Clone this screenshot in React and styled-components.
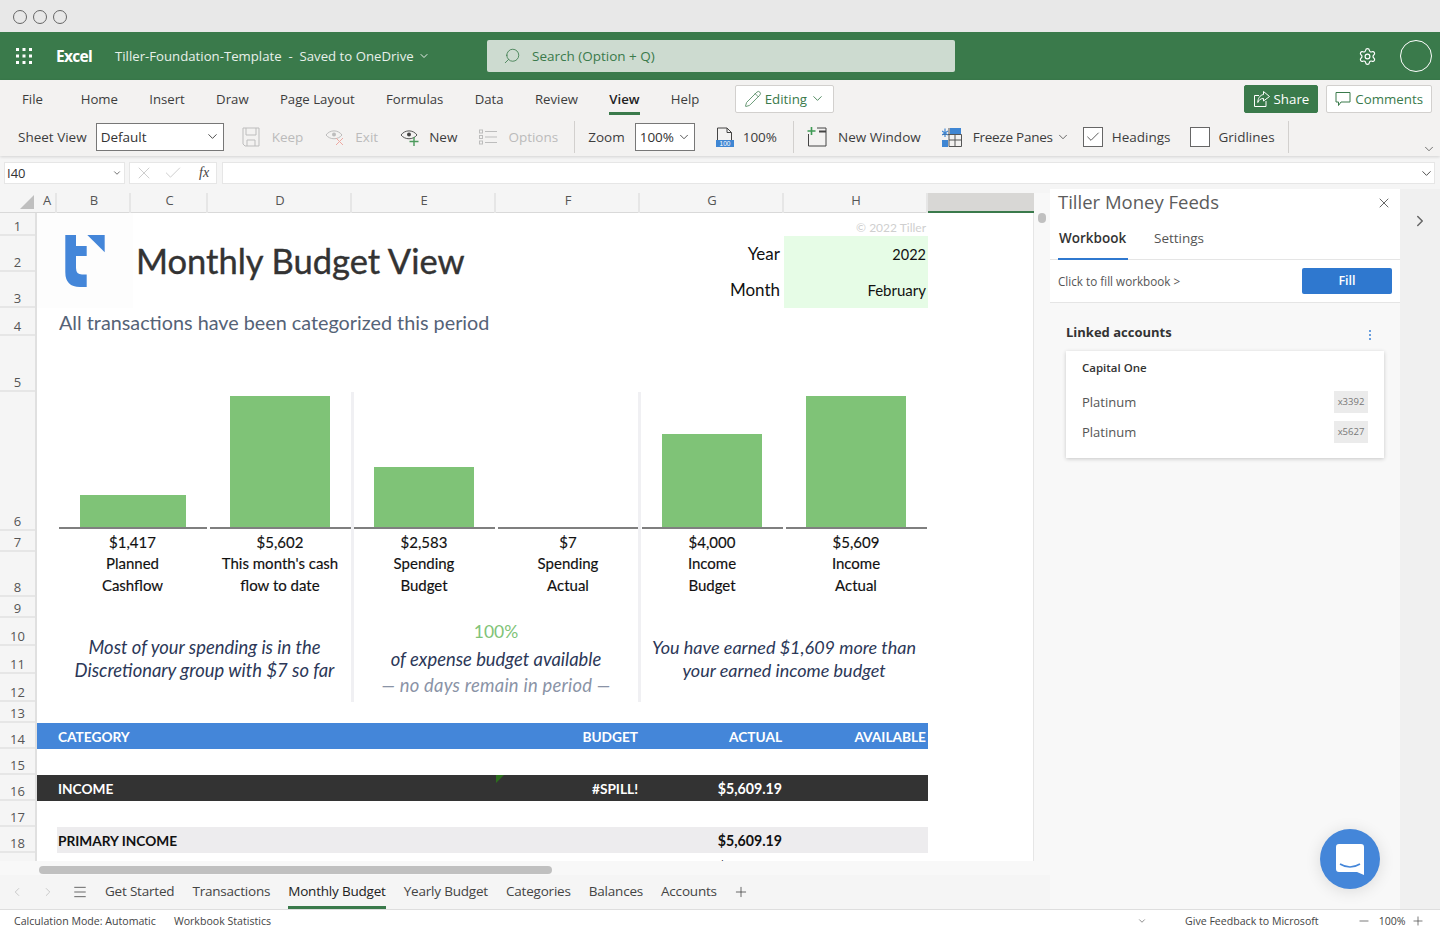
import React from 'react';
import styled, { createGlobalStyle } from 'styled-components';
import { ChevronDown, ChevronLeft, ChevronRight, Check, X, Plus, Minus, Menu, Search, Settings, Pencil } from 'lucide-react';

const GREEN = '#3a7a4b';
const BLUE = '#4486d9';
const UI_FONT = '"Open Sans", "Noto Sans", sans-serif';
const SHEET_FONT = 'Lato, "Open Sans", sans-serif';

const COLUMNS = [
  ['A', 20],
  ['B', 74],
  ['C', 77],
  ['D', 144],
  ['E', 144],
  ['F', 144],
  ['G', 144],
  ['H', 144],
];
const ROW_HEIGHTS = [24, 36, 36, 28, 56, 139, 21, 45, 21, 28, 28, 28, 21, 26, 26, 26, 26, 26];
const GRID_COLUMNS = COLUMNS.map((c) => `${c[1]}px`).join(' ') + ' 106px';
const GRID_ROWS = ROW_HEIGHTS.map((h) => `${h}px`).join(' ') + ' 26px';

const MENU = ['Home', 'Insert', 'Draw', 'Page Layout', 'Formulas', 'Data', 'Review', 'View', 'Help'];
const SHEETS = ['Get Started', 'Transactions', 'Monthly Budget', 'Yearly Budget', 'Categories', 'Balances', 'Accounts'];

const SUMMARY = [
  { col: '2 / 4', height: 32, width: 106, amount: '$1,417', lines: ['Planned', 'Cashflow'] },
  { col: '4', height: 131, width: 100, amount: '$5,602', lines: ["This month's cash", 'flow to date'] },
  { col: '5', height: 60, width: 100, amount: '$2,583', lines: ['Spending', 'Budget'] },
  { col: '6', height: 0, width: 100, amount: '$7', lines: ['Spending', 'Actual'] },
  { col: '7', height: 93, width: 100, amount: '$4,000', lines: ['Income', 'Budget'] },
  { col: '8', height: 131, width: 100, amount: '$5,609', lines: ['Income', 'Actual'] },
];

const GlobalStyle = createGlobalStyle`
  * { box-sizing: border-box; }
  html, body { margin: 0; padding: 0; background: #f3f2f1; }
  body { font-family: ${UI_FONT}; color: #333; }
`;

const Page = styled.div`
  width: 1440px;
  height: 932px;
  display: flex;
  flex-direction: column;
  overflow: hidden;
`;

const TitleBar = styled.div`
  height: 32px;
  background: #e8e8e8;
  display: flex;
  align-items: center;
  gap: 6px;
  padding: 2px 0 0 13px;
`;

const WindowDot = styled.span`
  width: 14px;
  height: 14px;
  border-radius: 50%;
  border: 1px solid #666;
`;

const AppBar = styled.div`
  height: 48px;
  background: ${GREEN};
  color: #fff;
  display: flex;
  align-items: center;
  padding-left: 16px;
  position: relative;
`;

const AppName = styled.div`
  font-weight: 700;
  font-size: 15.5px;
  letter-spacing: -0.7px;
  margin-left: 24px;
  width: 59px;
`;

const DocName = styled.div`
  font-size: 13.2px;
  display: flex;
  align-items: center;
  gap: 4px;
  width: 372px;
  white-space: pre;
  color: #e8f0ea;
`;

const SearchBox = styled.div`
  width: 468px;
  height: 32px;
  background: #cddbd0;
  border-radius: 2px;
  display: flex;
  align-items: center;
  gap: 11px;
  padding-left: 16px;
  font-size: 13.5px;
  color: ${GREEN};
`;

const AppBarRight = styled.div`
  margin-left: auto;
  display: flex;
  align-items: center;
  gap: 23px;
  padding-right: 8px;
`;

const Avatar = styled.span`
  width: 32px;
  height: 32px;
  border-radius: 50%;
  border: 1px solid #fff;
`;

const Ribbon = styled.div`
  height: 76px;
  background: #f3f2f1;
  box-shadow: 0 1px 3px rgba(0, 0, 0, 0.14);
  position: relative;
  z-index: 1;
`;

const MenuRow = styled.div`
  height: 37px;
  display: flex;
  align-items: center;
  padding: 0 8px 0 22px;
  font-size: 13.2px;
  color: #333;
`;

const MenuItem = styled.div`
  position: relative;
  margin-right: 31.3px;
  margin-left: ${(p) => p.$ml || 0}px;
  white-space: nowrap;
  font-weight: ${(p) => (p.$active ? 600 : 400)};
  color: ${(p) => (p.$active ? '#222' : '#3d3d3d')};
  &::after {
    content: '';
    display: ${(p) => (p.$active ? 'block' : 'none')};
    position: absolute;
    left: 0;
    right: 0;
    bottom: -7px;
    height: 3px;
    background: ${GREEN};
  }
`;

const OutlineButton = styled.div`
  height: 28px;
  display: flex;
  align-items: center;
  gap: ${(p) => p.$gap || 3}px;
  background: ${(p) => (p.$filled ? GREEN : '#fff')};
  color: ${(p) => (p.$filled ? '#fff' : GREEN)};
  border: 1px solid ${(p) => (p.$filled ? GREEN : '#d2d0ce')};
  border-radius: 2px;
  padding: 0 8px;
  font-size: 13.3px;
  white-space: nowrap;
  margin-left: ${(p) => p.$ml || 0};
`;

const ToolRow = styled.div`
  height: 39px;
  display: flex;
  align-items: center;
  padding-left: 18px;
  font-size: 13.5px;
  color: #3d3d3d;
  position: relative;
`;

const Tool = styled.div`
  display: flex;
  align-items: center;
  gap: ${(p) => p.$gap ?? 10}px;
  margin-left: ${(p) => p.$ml || 0}px;
  letter-spacing: ${(p) => p.$spacing || 0}px;
  color: ${(p) => (p.$muted ? '#bbb' : '#3d3d3d')};
  white-space: nowrap;
`;

const SelectBox = styled.div`
  width: ${(p) => p.$w}px;
  height: 28px;
  background: #fff;
  border: 1px solid #777;
  display: flex;
  align-items: center;
  justify-content: space-between;
  padding: 0 3px 0 4px;
  margin-left: ${(p) => p.$ml || 0}px;
  color: #333;
`;

const ToolDivider = styled.span`
  width: 1px;
  height: 32px;
  background: #d2d0ce;
  margin-left: ${(p) => p.$ml || 0}px;
`;

const CheckSquare = styled.span`
  width: 20px;
  height: 20px;
  background: #fff;
  border: 1px solid #666;
  display: flex;
  align-items: center;
  justify-content: center;
`;

const RibbonToggle = styled.span`
  position: absolute;
  right: 4px;
  bottom: 0;
  color: #555;
  display: flex;
`;

const FormulaRow = styled.div`
  height: 29px;
  background: #f5f5f5;
  display: flex;
  align-items: flex-end;
  padding: 0 5px 1px 4px;
  gap: 4px;
`;

const NameBox = styled.div`
  width: 121px;
  height: 22px;
  background: #fff;
  border: 1px solid #e6e6e6;
  display: flex;
  align-items: center;
  justify-content: space-between;
  padding: 0 2px 0 2px;
  font-size: 13px;
`;

const FxBox = styled.div`
  width: 88px;
  height: 22px;
  background: #fff;
  border: 1px solid #e6e6e6;
  display: flex;
  align-items: center;
  gap: 9px;
  padding-left: 4px;
  color: #c4c4c4;
  margin-right: 1px;
`;

const FxLabel = styled.span`
  font-family: "Liberation Serif", serif;
  font-style: italic;
  font-size: 14px;
  color: #444;
  margin-left: 7px;
`;

const FormulaInput = styled.div`
  flex: 1;
  height: 22px;
  background: #fff;
  border: 1px solid #e6e6e6;
  display: flex;
  align-items: center;
  justify-content: flex-end;
  color: #444;
`;

const Main = styled.div`
  height: 724px;
  display: flex;
  background: #f5f5f5;
`;

const Workspace = styled.div`
  width: 1050px;
  padding-top: 8px;
  display: flex;
  flex-direction: column;
`;

const ColumnBar = styled.div`
  height: 19px;
  display: grid;
  grid-template-columns: 37px ${GRID_COLUMNS};
  box-shadow: 0 1px 0 #d9d9d9;
  margin-right: 16px;
  position: relative;
`;

const Corner = styled.div`
  position: relative;
  &::after {
    content: '';
    position: absolute;
    right: 3px;
    top: 2px;
    border-style: solid;
    border-width: 0 0 14px 14px;
    border-color: transparent transparent #bfbfbf transparent;
  }
`;

const ColumnLabel = styled.div`
  font-size: 13px;
  color: #555;
  text-align: center;
  line-height: 14px;
  padding-left: 2px;
  border-right: 2px solid #e6e6e6;
`;

const SelectedColumn = styled.div`
  background: #d8d7d5;
  border-bottom: 2px solid ${GREEN};
  height: 20px;
`;

const SheetArea = styled.div`
  height: 649px;
  display: flex;
`;

const RowBar = styled.div`
  width: 37px;
  border-right: 2px solid #e0e0e0;
  overflow: hidden;
`;

const RowLabel = styled.div`
  height: ${(p) => p.$h}px;
  display: flex;
  align-items: flex-end;
  justify-content: center;
  line-height: 15px;
  font-size: 13px;
  color: #555;
  border-bottom: 2px solid #e6e6e6;
`;

const SheetGrid = styled.div`
  width: 997px;
  background: #fff;
  display: grid;
  grid-template-columns: ${GRID_COLUMNS};
  grid-template-rows: ${GRID_ROWS};
  border-right: 1px solid #e6e6e6;
  overflow: hidden;
  font-family: ${SHEET_FONT};
  color: #111;
`;

const Cell = styled.div`
  grid-column: ${(p) => p.$col};
  grid-row: ${(p) => p.$row};
  min-width: 0;
`;

const LogoCell = styled(Cell)`
  background: #fdfdfd;
  margin-right: -2px;
  display: flex;
`;

const SheetTitle = styled(Cell)`
  font-size: 34.5px;
  font-weight: 400;
  -webkit-text-stroke: 0.4px #333;
  color: #333;
  display: flex;
  align-items: center;
  padding: 0 0 0 5px;
  white-space: nowrap;
`;

const Copyright = styled(Cell)`
  text-align: right;
  font-size: 12px;
  color: #cfcfcf;
  padding: 8px 2px 0 0;
`;

const FieldLabel = styled(Cell)`
  font-size: 17px;
  text-align: right;
  padding-right: 4px;
  line-height: 36px;
`;

const FieldBackground = styled(Cell)`
  background: #e6fce6;
`;

const FieldValue = styled(Cell)`
  text-align: right;
  font-size: ${(p) => p.$size}px;
  padding-right: 2px;
  line-height: 37px;
`;

const Subtitle = styled(Cell)`
  font-size: 19.8px;
  color: #556377;
  padding-left: 2px;
  line-height: 29px;
  white-space: nowrap;
`;

const ChartSlot = styled(Cell)`
  display: flex;
  align-items: flex-end;
  justify-content: center;
  border-bottom: 2px solid #7f7f7f;
  margin: 0 1px 2px 2px;
`;

const Bar = styled.div`
  background: #7fc377;
  width: ${(p) => p.$w}px;
  height: ${(p) => p.$h}px;
  margin-right: 1px;
`;

const Amount = styled(Cell)`
  text-align: center;
  font-size: 15px;
  -webkit-text-stroke: 0.15px #111;
  line-height: 22px;
`;

const AmountLabel = styled(Cell)`
  text-align: center;
  font-size: 15px;
  -webkit-text-stroke: 0.15px #111;
  line-height: 21.6px;
  padding-top: 1px;
  white-space: nowrap;
`;

const Divider = styled(Cell)`
  border-left: 3px solid #f0f0f3;
  margin-left: ${(p) => p.$ml}px;
`;

const Note = styled(Cell)`
  display: flex;
  flex-direction: column;
  align-items: center;
  justify-content: center;
  font-style: italic;
  font-size: ${(p) => p.$size}px;
  line-height: 23px;
  padding-bottom: 2px;
  color: #2c3858;
  white-space: nowrap;
`;

const Percent = styled(Cell)`
  text-align: center;
  font-size: 17.5px;
  color: #7fc377;
  line-height: 28px;
`;

const NoteLine = styled(Cell)`
  text-align: center;
  font-style: italic;
  font-size: 18.4px;
  line-height: ${(p) => p.$lh}px;
  letter-spacing: ${(p) => p.$spacing || 0}px;
  color: ${(p) => p.$color};
  white-space: nowrap;
`;

const Band = styled(Cell)`
  display: grid;
  grid-template-columns: subgrid;
  align-items: center;
  background: ${(p) => p.$bg};
  color: ${(p) => p.$fg};
  font-size: 13.7px;
  font-weight: ${(p) => p.$weight || 700};
  padding: ${(p) => p.$pad || '1px 0 0'};
`;

const BandText = styled.div`
  grid-column: ${(p) => p.$col};
  text-align: ${(p) => (p.$right ? 'right' : 'left')};
  padding: ${(p) => (p.$right ? '0 2px 0 0' : '0 0 0 1px')};
  white-space: nowrap;
`;

const BandAmount = styled(BandText)`
  font-size: 14.2px;
`;

const SpillMark = styled.span`
  position: absolute;
  left: 496px;
  top: 775px;
  border-style: solid;
  border-width: 8px 8px 0 0;
  border-color: #2c6e1d transparent transparent transparent;
`;

const VScroll = styled.div`
  width: 16px;
  height: 668px;
  margin-top: -19px;
  background: #f8f8f8;
  flex: none;
  padding: 20px 0 0 4px;
`;

const VThumb = styled.div`
  width: 8px;
  height: 10px;
  border-radius: 4px;
  background: #c0c0c0;
`;

const HScroll = styled.div`
  height: 14px;
  background: #f8f8f8;
  padding: 5px 0 0 39px;
  position: relative;
`;

const HThumb = styled.div`
  width: 513px;
  height: 8px;
  border-radius: 4px;
  background: #c0c0c0;
`;

const TabBar = styled.div`
  height: 34px;
  display: flex;
  align-items: center;
  padding-left: 10px;
  font-size: 13.5px;
  color: #444;
  background: #f5f5f5;
`;

const TabNav = styled.span`
  display: flex;
  color: ${(p) => p.$color || '#aaa'};
  margin-left: ${(p) => p.$ml || 0}px;
  margin-right: ${(p) => p.$mr || 0}px;
`;

const SheetTab = styled.div`
  position: relative;
  height: 34px;
  line-height: 32px;
  margin-right: 18px;
  letter-spacing: -0.2px;
  white-space: nowrap;
  color: ${(p) => (p.$active ? '#222' : '#444')};
  border-bottom: 3px solid ${(p) => (p.$active ? GREEN : 'transparent')};
`;

const TaskPane = styled.div`
  width: 350px;
  margin-top: 4px;
  display: flex;
  flex-direction: column;
  background: #fff;
  position: relative;
`;

const PaneTitle = styled.div`
  height: 28px;
  padding: 0 8px 3px;
  display: flex;
  align-items: center;
  justify-content: space-between;
  font-size: 18.5px;
  color: #5c5c5c;
`;

const PaneClose = styled.span`
  display: flex;
  color: #666;
  margin-top: 3px;
`;

const PaneTabs = styled.div`
  height: 43px;
  display: flex;
  padding-left: 8px;
  border-bottom: 1px solid #e5e5e5;
  font-size: 13.5px;
`;

const PaneTab = styled.div`
  width: ${(p) => p.$w}px;
  line-height: 42px;
  padding-left: 1px;
  height: 43px;
  margin-right: ${(p) => p.$mr || 0}px;
  font-weight: ${(p) => (p.$active ? 600 : 400)};
  color: ${(p) => (p.$active ? '#333' : '#555')};
  border-bottom: 2px solid ${(p) => (p.$active ? '#2f78cf' : 'transparent')};
`;

const FillRow = styled.div`
  height: 43px;
  display: flex;
  align-items: center;
  justify-content: space-between;
  padding: 0 8px;
  font-size: 11.7px;
  color: #555;
  border-bottom: 1px solid #e5e5e5;
`;

const FillButton = styled.div`
  width: 90px;
  height: 26px;
  background: #2f78cf;
  color: #fff;
  border-radius: 2px;
  text-align: center;
  line-height: 26px;
  font-size: 12.5px;
  font-weight: 600;
`;

const PaneBody = styled.div`
  flex: 1;
  background: #f8f8f8;
  padding: 20px 16px 0;
`;

const AccountsHeading = styled.div`
  display: flex;
  justify-content: space-between;
  align-items: center;
  font-size: 13px;
  font-weight: 700;
  color: #333;
  height: 18px;
  margin-bottom: 10px;
`;

const KebabDots = styled.span`
  display: flex;
  flex-direction: column;
  gap: 2px;
  margin: 5px 13px 0 0;
  & > i {
    width: 2px;
    height: 2px;
    background: #6a9fdf;
  }
`;

const AccountCard = styled.div`
  width: 318px;
  height: 107px;
  background: #fff;
  box-shadow: 0 1px 4px rgba(0, 0, 0, 0.2);
  padding: 8px 16px 0;
`;

const BankName = styled.div`
  font-size: 11.5px;
  font-weight: 600;
  color: #333;
  line-height: 18px;
  margin-bottom: 14px;
`;

const AccountRow = styled.div`
  height: 22px;
  margin-bottom: 8px;
  display: flex;
  align-items: center;
  justify-content: space-between;
  font-size: 13px;
  color: #555;
`;

const AccountBadge = styled.span`
  width: 34px;
  height: 22px;
  background: #ebebeb;
  font-size: 9.5px;
  color: #777;
  text-align: center;
  line-height: 22px;
`;

const ChatBubble = styled.div`
  position: absolute;
  left: 270px;
  top: 640px;
  width: 60px;
  height: 60px;
  border-radius: 50%;
  background: ${BLUE};
  box-shadow: 0 2px 16px rgba(0, 0, 0, 0.12);
  display: flex;
  align-items: center;
  justify-content: center;
`;

const CollapseStrip = styled.div`
  flex: 1;
  background: #f0f0f0;
  margin-top: 4px;
  padding: 23px 0 0 11px;
  color: #666;
`;

const StatusBar = styled.div`
  height: 23px;
  background: #fff;
  border-top: 1px solid #dedede;
  display: flex;
  align-items: center;
  font-size: 10.6px;
  color: #444;
  padding-left: 14px;
`;

const StatusText = styled.span`
  margin-left: ${(p) => p.$ml || 0}px;
  white-space: nowrap;
`;

const StatusIcon = styled.span`
  display: flex;
  margin-left: ${(p) => p.$ml || 0}px;
  color: ${(p) => p.$color || '#444'};
`;

const Waffle = () => (
  <svg width="16" height="16" viewBox="0 0 16 16" fill="#fff">
    {[0, 6.5, 13].map((y) =>
      [0, 6.5, 13].map((x) => <rect key={`${x}-${y}`} x={x} y={y} width="3" height="3" />),
    )}
  </svg>
);

const ShareIcon = () => (
  <svg width="18" height="18" viewBox="0 0 18 18" fill="none" stroke="#fff" strokeWidth="1">
    <path d="M6 5.5H1.5V16.5H13V11" />
    <path d="M10.5 1.5L16.5 6.5L10.5 11V8.5C7.5 8.5 5.8 10 4.8 12.5C4.8 8.5 7 5 10.5 4.5Z" />
  </svg>
);

const CommentIcon = () => (
  <svg width="16" height="16" viewBox="0 0 16 16" fill="none" stroke={GREEN} strokeWidth="1">
    <path d="M1 1.5H15V11H6L3.5 14.5V11H1Z" />
  </svg>
);

const SaveIcon = () => (
  <svg width="18" height="20" viewBox="0 0 18 20" fill="none" stroke="#bdbdbd" strokeWidth="1">
    <path d="M1 1H17V19H3L1 17Z" />
    <path d="M4 1V8H14V1M5 19V13H13V19" />
  </svg>
);

const EyeIcon = ({ mark }) => (
  <svg width="20" height="20" viewBox="0 0 20 20" fill="none">
    <path
      d="M1 8C5 2.5 13 2.5 17 8C13 13 5 13 1 8Z"
      stroke={mark === 'x' ? '#bdbdbd' : '#555'}
      strokeWidth="1"
    />
    <circle cx="9" cy="7.5" r="2" fill={mark === 'x' ? '#bdbdbd' : '#444'} />
    {mark === 'x' && <path d="M11 11L18 18M18 11L11 18" stroke="#eda9a2" strokeWidth="1" />}
    {mark === 'plus' && <path d="M14 10V19M9.5 14.5H18.5" stroke="#4b9a5c" strokeWidth="1.4" />}
  </svg>
);

const OptionsIcon = () => (
  <svg width="18" height="18" viewBox="0 0 18 18" fill="none" stroke="#bdbdbd" strokeWidth="1">
    <path d="M6 3.5H18M6 9H18M6 14.5H18" />
    <rect x="0.5" y="2" width="3" height="3" />
    <rect x="0.5" y="7.5" width="3" height="3" />
    <rect x="0.5" y="13" width="3" height="3" />
  </svg>
);

const ZoomDocIcon = () => (
  <svg width="18" height="20" viewBox="0 0 18 20" fill="none">
    <path d="M1.5 14V1H11L15.5 5.5V14M11 1V5.5H15.5" stroke="#444" strokeWidth="1" />
    <rect x="0" y="13" width="18" height="7" fill="#3f86d3" />
    <text x="9" y="19" fontSize="6.5" fill="#fff" textAnchor="middle" fontFamily="Liberation Sans, sans-serif">
      100
    </text>
  </svg>
);

const NewWindowIcon = () => (
  <svg width="20" height="20" viewBox="0 0 20 20" fill="none">
    <path d="M1.5 7V19H19V1H10" stroke="#444" strokeWidth="1" />
    <path d="M12 4.5H19" stroke="#444" strokeWidth="2" />
    <path d="M4.5 0V8M0.5 4H8.5" stroke="#3f9a55" strokeWidth="1.6" />
  </svg>
);

const FreezeIcon = () => (
  <svg width="20" height="20" viewBox="0 0 20 20" fill="none">
    <rect x="0" y="13" width="6" height="7" fill="#3f86d3" />
    <rect x="8" y="1" width="11" height="6" fill="#3f86d3" />
    <path d="M7 1V19.5H19.5V7.5H0M7 13H19.5M13 7.5V19.5" stroke="#555" strokeWidth="1" />
    <path d="M3 1.5V10M0 4L6 8M0 8L6 4" stroke="#3f86d3" strokeWidth="1.2" />
  </svg>
);

const Logo = () => (
  <svg width="96" height="96" viewBox="37 212 96 96" fill={BLUE}>
    <path d="M65.3 235H76V246H86.7V256H76V268Q76 274.5 82 274.5H86.7V287H80Q65.3 287 65.3 272Z" />
    <path d="M87.3 235H104.7V252.3Z" />
  </svg>
);

const ChatIcon = () => (
  <svg width="28" height="31" viewBox="0 0 28 31">
    <path d="M3 0H25Q28 0 28 3V31L21 28H3Q0 28 0 25V3Q0 0 3 0Z" fill="#fff" />
    <path d="M4 20Q14 26 24 20" fill="none" stroke={BLUE} strokeWidth="1.6" />
  </svg>
);

const SummaryColumns = () =>
  SUMMARY.map((item) => (
    <React.Fragment key={item.amount}>
      <ChartSlot $col={item.col} $row="6">
        <Bar $w={item.width} $h={item.height} />
      </ChartSlot>
      <Amount $col={item.col} $row="7">
        {item.amount}
      </Amount>
      <AmountLabel $col={item.col} $row="8">
        {item.lines[0]}
        <br />
        {item.lines[1]}
      </AmountLabel>
    </React.Fragment>
  ));

const App = () => {
  return (
    <Page>
      <GlobalStyle />
      <TitleBar>
        <WindowDot />
        <WindowDot />
        <WindowDot />
      </TitleBar>

      <AppBar>
        <Waffle />
        <AppName>Excel</AppName>
        <DocName>
          Tiller-Foundation-Template  -  Saved to OneDrive
          <ChevronDown size={12} />
        </DocName>
        <SearchBox>
          <Search size={18} strokeWidth={1.1} style={{ transform: 'scaleX(-1)' }} />
          Search (Option + Q)
        </SearchBox>
        <AppBarRight>
          <Settings size={19} strokeWidth={1.5} />
          <Avatar />
        </AppBarRight>
      </AppBar>

      <Ribbon>
        <MenuRow>
          <MenuItem>File</MenuItem>
          {MENU.map((item, i) => (
            <MenuItem key={item} $ml={i === 0 ? 6.5 : 0} $active={item === 'View'}>
              {item}
            </MenuItem>
          ))}
          <OutlineButton $ml="4px">
            <Pencil size={18} strokeWidth={1} />
            Editing
            <ChevronDown size={15} strokeWidth={1.4} />
          </OutlineButton>
          <OutlineButton $filled $ml="auto">
            <ShareIcon />
            Share
          </OutlineButton>
          <OutlineButton $ml="8px" $gap={4}>
            <CommentIcon />
            Comments
          </OutlineButton>
        </MenuRow>
        <ToolRow>
          <Tool>Sheet View</Tool>
          <SelectBox $w={128} $ml={9}>
            Default
            <ChevronDown size={15} strokeWidth={1.4} />
          </SelectBox>
          <Tool $muted $ml={18} $gap={12}>
            <SaveIcon />
            Keep
          </Tool>
          <Tool $muted $ml={22}>
            <EyeIcon mark="x" />
            Exit
          </Tool>
          <Tool $ml={22} $gap={9}>
            <EyeIcon mark="plus" />
            New
          </Tool>
          <Tool $muted $ml={22} $gap={11}>
            <OptionsIcon />
            Options
          </Tool>
          <ToolDivider $ml={16} />
          <Tool $ml={13}>Zoom</Tool>
          <SelectBox $w={60} $ml={10}>
            100%
            <ChevronDown size={14} strokeWidth={1.4} />
          </SelectBox>
          <Tool $ml={21} $gap={9}>
            <ZoomDocIcon />
            100%
          </Tool>
          <ToolDivider $ml={16} />
          <Tool $ml={13} $gap={11}>
            <NewWindowIcon />
            New Window
          </Tool>
          <Tool $ml={21} $gap={11} $spacing={-0.25}>
            <FreezeIcon />
            Freeze Panes
            <ChevronDown size={14} strokeWidth={1.3} style={{ marginLeft: -8 }} />
          </Tool>
          <Tool $ml={13} $gap={9}>
            <CheckSquare>
              <Check size={16} strokeWidth={1.2} color="#333" />
            </CheckSquare>
            Headings
          </Tool>
          <Tool $ml={20} $gap={8}>
            <CheckSquare />
            Gridlines
          </Tool>
          <ToolDivider $ml={13} />
          <RibbonToggle>
            <ChevronDown size={14} strokeWidth={1.4} />
          </RibbonToggle>
        </ToolRow>
      </Ribbon>

      <FormulaRow>
        <NameBox>
          I40
          <ChevronDown size={10} strokeWidth={2} color="#555" />
        </NameBox>
        <FxBox>
          <X size={20} strokeWidth={1} />
          <Check size={20} strokeWidth={1} />
          <FxLabel>fx</FxLabel>
        </FxBox>
        <FormulaInput>
          <ChevronDown size={15} strokeWidth={1.5} />
        </FormulaInput>
      </FormulaRow>

      <Main>
        <Workspace>
          <ColumnBar>
            <Corner />
            {COLUMNS.map((c) => (
              <ColumnLabel key={c[0]}>{c[0]}</ColumnLabel>
            ))}
            <SelectedColumn />
          </ColumnBar>

          <SheetArea>
            <RowBar>
              {ROW_HEIGHTS.map((h, i) => (
                <RowLabel key={i} $h={h}>
                  {i + 1}
                </RowLabel>
              ))}
            </RowBar>

            <SheetGrid>
              <LogoCell $col="1 / 3" $row="1 / 4">
                <Logo />
              </LogoCell>
              <SheetTitle $col="3 / 8" $row="1 / 4">
                Monthly Budget View
              </SheetTitle>
              <Copyright $col="8" $row="1">
                © 2022 Tiller
              </Copyright>
              <FieldLabel $col="7" $row="2">
                Year
              </FieldLabel>
              <FieldLabel $col="7" $row="3">
                Month
              </FieldLabel>
              <FieldBackground $col="8" $row="2 / 4" />
              <FieldValue $col="8" $row="2" $size={14.5}>
                2022
              </FieldValue>
              <FieldValue $col="8" $row="3" $size={15}>
                February
              </FieldValue>
              <Subtitle $col="2 / 8" $row="4">
                All transactions have been categorized this period
              </Subtitle>

              <SummaryColumns />

              <Divider $col="5" $row="6 / 13" $ml={-1} />
              <Divider $col="7" $row="6 / 13" $ml={-2} />

              <Note $col="2 / 5" $row="10 / 13" $size={18.4}>
                <span>Most of your spending is in the</span>
                <span>Discretionary group with $7 so far</span>
              </Note>
              <Percent $col="5 / 7" $row="10">
                100%
              </Percent>
              <NoteLine $col="5 / 7" $row="11" $color="#2c3858" $lh={26}>
                of expense budget available
              </NoteLine>
              <NoteLine $col="5 / 7" $row="12" $color="#8a93a6" $lh={22} $spacing={0.25}>
                — no days remain in period —
              </NoteLine>
              <Note $col="7 / 9" $row="10 / 13" $size={18}>
                <span>You have earned $1,609 more than</span>
                <span>your earned income budget</span>
              </Note>

              <Band $col="1 / 9" $row="14" $bg={BLUE} $fg="#fff">
                <BandText $col="2 / 5">CATEGORY</BandText>
                <BandText $col="6" $right>
                  BUDGET
                </BandText>
                <BandText $col="7" $right>
                  ACTUAL
                </BandText>
                <BandText $col="8" $right>
                  AVAILABLE
                </BandText>
              </Band>
              <Band $col="1 / 9" $row="16" $bg="#333" $fg="#fff">
                <BandText $col="2 / 5">INCOME</BandText>
                <BandText $col="6" $right>
                  #SPILL!
                </BandText>
                <BandAmount $col="7" $right>
                  $5,609.19
                </BandAmount>
              </Band>
              <Band $col="2 / 9" $row="18" $bg="#edecee" $fg="#111">
                <BandText $col="1 / 4">PRIMARY INCOME</BandText>
                <BandAmount $col="6" $right>
                  $5,609.19
                </BandAmount>
              </Band>
              <Band $col="1 / 9" $row="19" $bg="#fff" $fg="#111" $weight={400} $pad="0 0 1px">
                <BandText $col="2 / 5">Paycheck</BandText>
                <BandAmount $col="7" $right>
                  $5,609.19
                </BandAmount>
              </Band>
            </SheetGrid>
            <VScroll>
              <VThumb />
            </VScroll>
            <SpillMark />
          </SheetArea>

          <HScroll>
            <HThumb />
          </HScroll>

          <TabBar>
            <TabNav>
              <ChevronLeft size={14} strokeWidth={1} />
            </TabNav>
            <TabNav $ml={17}>
              <ChevronRight size={14} strokeWidth={1} />
            </TabNav>
            <TabNav $ml={17} $mr={17} $color="#444">
              <Menu size={16} strokeWidth={1.2} />
            </TabNav>
            {SHEETS.map((sheet) => (
              <SheetTab key={sheet} $active={sheet === 'Monthly Budget'}>
                {sheet}
              </SheetTab>
            ))}
            <TabNav $color="#444" $ml={-2}>
              <Plus size={16} strokeWidth={1.2} />
            </TabNav>
          </TabBar>
        </Workspace>

        <TaskPane>
          <PaneTitle>
            Tiller Money Feeds
            <PaneClose>
              <X size={16} strokeWidth={1.5} />
            </PaneClose>
          </PaneTitle>
          <PaneTabs>
            <PaneTab $w={70} $mr={25} $active>
              Workbook
            </PaneTab>
            <PaneTab $w={60}>Settings</PaneTab>
          </PaneTabs>
          <FillRow>
            Click to fill workbook &gt;
            <FillButton>Fill</FillButton>
          </FillRow>
          <PaneBody>
            <AccountsHeading>
              Linked accounts
              <KebabDots>
                <i />
                <i />
                <i />
              </KebabDots>
            </AccountsHeading>
            <AccountCard>
              <BankName>Capital One</BankName>
              <AccountRow>
                Platinum
                <AccountBadge>x3392</AccountBadge>
              </AccountRow>
              <AccountRow>
                Platinum
                <AccountBadge>x5627</AccountBadge>
              </AccountRow>
            </AccountCard>
          </PaneBody>
          <ChatBubble>
            <ChatIcon />
          </ChatBubble>
        </TaskPane>

        <CollapseStrip>
          <ChevronRight size={18} strokeWidth={2} />
        </CollapseStrip>
      </Main>

      <StatusBar>
        <StatusText>Calculation Mode: Automatic</StatusText>
        <StatusText $ml={18}>Workbook Statistics</StatusText>
        <StatusIcon $ml={866} $color="#777">
          <ChevronDown size={10} strokeWidth={2} />
        </StatusIcon>
        <StatusText $ml={38}>Give Feedback to Microsoft</StatusText>
        <StatusIcon $ml={38}>
          <Minus size={14} strokeWidth={1.2} />
        </StatusIcon>
        <StatusText $ml={8}>100%</StatusText>
        <StatusIcon $ml={5}>
          <Plus size={14} strokeWidth={1.2} />
        </StatusIcon>
      </StatusBar>
    </Page>
  );
};

export default App;
